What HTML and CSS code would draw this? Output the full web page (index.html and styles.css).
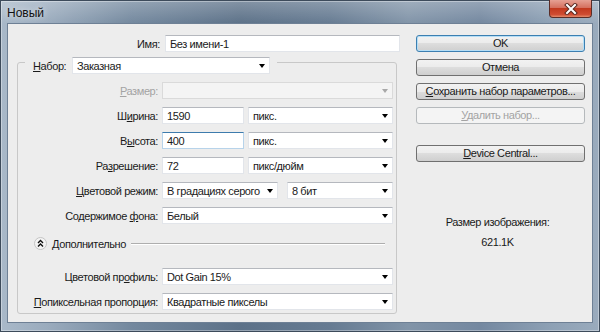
FILE: index.html
```html
<!DOCTYPE html>
<html lang="ru">
<head>
  <meta charset="UTF-8">
  <title>Новый</title>
  <link rel="stylesheet" href="styles.css">
</head>
<body>
  <div class="window">
    <div class="titlebar">
      <span class="title">Новый</span>
      <div class="close">
        <svg width="14" height="12" viewBox="0 0 14 12">
          <path d="M3 2 L11 10 M11 2 L3 10" stroke="#5a2a22" stroke-width="4" stroke-linecap="square"/>
          <path d="M3 2 L11 10 M11 2 L3 10" stroke="#fff" stroke-width="2" stroke-linecap="square"/>
        </svg>
      </div>
    </div>
    <div class="client">
      <div class="main">
        <div class="row name-row">
          <span class="lbl">Имя:</span>
          <div class="field w-name">Без имени-1</div>
        </div>

        <div class="group">
          <div class="legend">
            <span class="legend-lbl"><u>Н</u>абор:</span>
            <div class="combo w-preset">Заказная<span class="arrow"></span></div>
          </div>

          <div class="rows">
            <div class="row">
              <span class="lbl disabled"><u>Р</u>азмер:</span>
              <div class="combo w-full disabled"><span class="arrow"></span></div>
            </div>
            <div class="row">
              <span class="lbl">Ш<u>и</u>рина:</span>
              <div class="field w-num">1590</div>
              <div class="combo w-unit">пикс.<span class="arrow"></span></div>
            </div>
            <div class="row">
              <span class="lbl">В<u>ы</u>сота:</span>
              <div class="field w-num focus">400</div>
              <div class="combo w-unit">пикс.<span class="arrow"></span></div>
            </div>
            <div class="row">
              <span class="lbl">Ра<u>з</u>решение:</span>
              <div class="field w-num">72</div>
              <div class="combo w-unit">пикс/дюйм<span class="arrow"></span></div>
            </div>
            <div class="row">
              <span class="lbl"><u>Ц</u>ветовой режим:</span>
              <div class="combo w-mode">В градациях серого<span class="arrow"></span></div>
              <div class="combo w-bits">8 бит<span class="arrow"></span></div>
            </div>
            <div class="row">
              <span class="lbl">Содержимое <u>ф</u>она:</span>
              <div class="combo w-full">Белый<span class="arrow"></span></div>
            </div>

            <div class="row advanced">
              <span class="toggle">
                <svg width="13" height="13" viewBox="0 0 13 13">
                  <circle cx="6.5" cy="6.5" r="6" fill="#f4f4f4" stroke="#c4c4c4"/>
                  <path d="M4 6 L6.5 3.5 L9 6 M4 9.5 L6.5 7 L9 9.5" fill="none" stroke="#111" stroke-width="1.4"/>
                </svg>
              </span>
              <span class="adv-text">Дополнительно</span>
              <span class="sep"></span>
            </div>

            <div class="row profile">
              <span class="lbl">Цветовой пр<u>о</u>филь:</span>
              <div class="combo w-full">Dot Gain 15%<span class="arrow"></span></div>
            </div>
            <div class="row">
              <span class="lbl"><u>П</u>опиксельная пропорция:</span>
              <div class="combo w-full">Квадратные пикселы<span class="arrow"></span></div>
            </div>
          </div>
        </div>
      </div>

      <div class="side">
        <div class="btn default">OK</div>
        <div class="btn">Отмена</div>
        <div class="btn"><u>С</u>охранить набор параметров...</div>
        <div class="btn disabled"><u>У</u>далить набор...</div>
        <div class="btn device"><u>D</u>evice Central...</div>
        <div class="info">
          <div>Размер изображения:</div>
          <div>621.1K</div>
        </div>
      </div>
    </div>
  </div>
</body>
</html>
```

FILE: styles.css
```css
body {
  margin: 0;
  font-family: "Liberation Sans", Arial, sans-serif;
  font-size: 11px;
  letter-spacing: -0.4px;
  color: #1a1a1a;
}
u {
  text-decoration: underline;
  text-underline-offset: 1px;
}

/* window frame */
.window {
  width: 600px;
  height: 332px;
  box-sizing: border-box;
  padding: 0 7px 9px;
  display: flex;
  flex-direction: column;
  background:
    linear-gradient(to bottom, rgba(255,255,255,0.25), rgba(255,255,255,0) 24px),
    linear-gradient(to right, #a9b9c9 0%, #9aabbd 8%, #73889e 22%, #5c7188 40%, #667b92 55%, #8194a8 68%, #7488a0 80%, #8ea1b5 92%, #9aabbd 100%);
  box-shadow: inset 0 0 0 1px #3d4b5b, inset 0 0 0 2px rgba(255,255,255,0.35);
}
.titlebar {
  height: 23px;
  display: flex;
  align-items: flex-start;
}
.title {
  font-size: 12px;
  letter-spacing: 0;
  line-height: 14px;
  padding-top: 6px;
  color: #111;
  text-shadow: 0 0 6px rgba(255,255,255,0.8);
}
.close {
  margin-left: auto;
  margin-right: 1px;
  width: 43px;
  height: 18px;
  box-sizing: border-box;
  border: 1px solid #5a2d27;
  border-top: none;
  border-radius: 0 0 4px 4px;
  background: linear-gradient(#e6a194 0%, #d5705f 45%, #c2391f 50%, #cf4c32 85%, #e58b6b 100%);
  display: flex;
  align-items: center;
  justify-content: center;
}

/* client area */
.client {
  flex: 1;
  display: flex;
  background: #ededed;
  border: 1px solid #6e8095;
}
.main {
  width: 392px;
  box-sizing: border-box;
  padding: 11px 0 0 9px;
}
.row {
  display: flex;
  align-items: center;
  height: 17px;
}
.lbl {
  width: 140px;
  margin-right: 4px;
  text-align: right;
  white-space: nowrap;
}
.name-row .lbl {
  width: 143px;
  margin-right: 5px;
}
.disabled {
  color: #a3a3a3;
}

/* inputs and combos */
.field, .combo {
  height: 17px;
  box-sizing: border-box;
  background: #fff;
  border: 1px solid #e2e5ea;
  border-top-color: #b5b8be;
  padding: 0 4px;
  display: flex;
  align-items: center;
  white-space: nowrap;
}
.field.focus {
  border-color: #b7d3ea;
  border-top-color: #3d7bad;
}
.combo.disabled {
  background: #f4f4f4;
  border-color: #dadada;
}
.arrow {
  margin-left: auto;
  width: 0;
  height: 0;
  border-left: 3.5px solid transparent;
  border-right: 3.5px solid transparent;
  border-top: 4px solid #000;
}
.combo.disabled .arrow {
  border-top-color: #a8a8a8;
}
.w-name { width: 235px; }
.w-preset { width: 198px; }
.w-full { width: 231px; }
.w-num { width: 82px; margin-right: 4px; }
.w-unit { width: 145px; }
.w-mode { width: 116px; margin-right: 9px; }
.w-bits { width: 106px; }

/* group box */
.group {
  width: 380px;
  box-sizing: border-box;
  margin-top: 10px;
  border: 1px solid #c8c8c8;
  border-radius: 3px;
  padding: 0 2px 3px 0;
}
.legend {
  display: flex;
  align-items: center;
  width: fit-content;
  margin: -6px 0 0 7px;
  padding: 0 7px 0 8px;
  background: #ededed;
}
.legend-lbl {
  width: 39px;
}
.rows {
  margin-top: 8px;
  display: flex;
  flex-direction: column;
  gap: 8px;
}
.advanced {
  margin-top: 3px;
}
.toggle {
  margin-left: 16px;
  display: flex;
}
.adv-text {
  margin-left: 5px;
}
.sep {
  flex: 1;
  margin: 0 9px 0 5px;
  border-top: 1px solid #aeaeae;
  border-bottom: 1px solid #fff;
}
.profile {
  margin-top: 8px;
}

/* right column */
.side {
  width: 169px;
  margin-left: 16px;
  padding-top: 11px;
  display: flex;
  flex-direction: column;
  gap: 7px;
}
.btn {
  height: 17px;
  box-sizing: border-box;
  border: 1px solid #707070;
  border-radius: 3px;
  background: linear-gradient(#f2f2f2 0%, #ebebeb 50%, #dddddd 50%, #cfcfcf 100%);
  text-align: center;
  line-height: 15px;
  white-space: nowrap;
}
.btn.default {
  border-color: #3c7fb1;
  box-shadow: inset 0 0 0 1px #b5def6;
}
.btn.disabled {
  border-color: #b5b9bc;
  background: #f4f4f4;
}
.btn.device {
  margin-top: 14px;
}
.info {
  margin-top: 47px;
  padding-right: 6px;
  text-align: center;
  line-height: 13px;
  display: flex;
  flex-direction: column;
  gap: 7px;
}
```
